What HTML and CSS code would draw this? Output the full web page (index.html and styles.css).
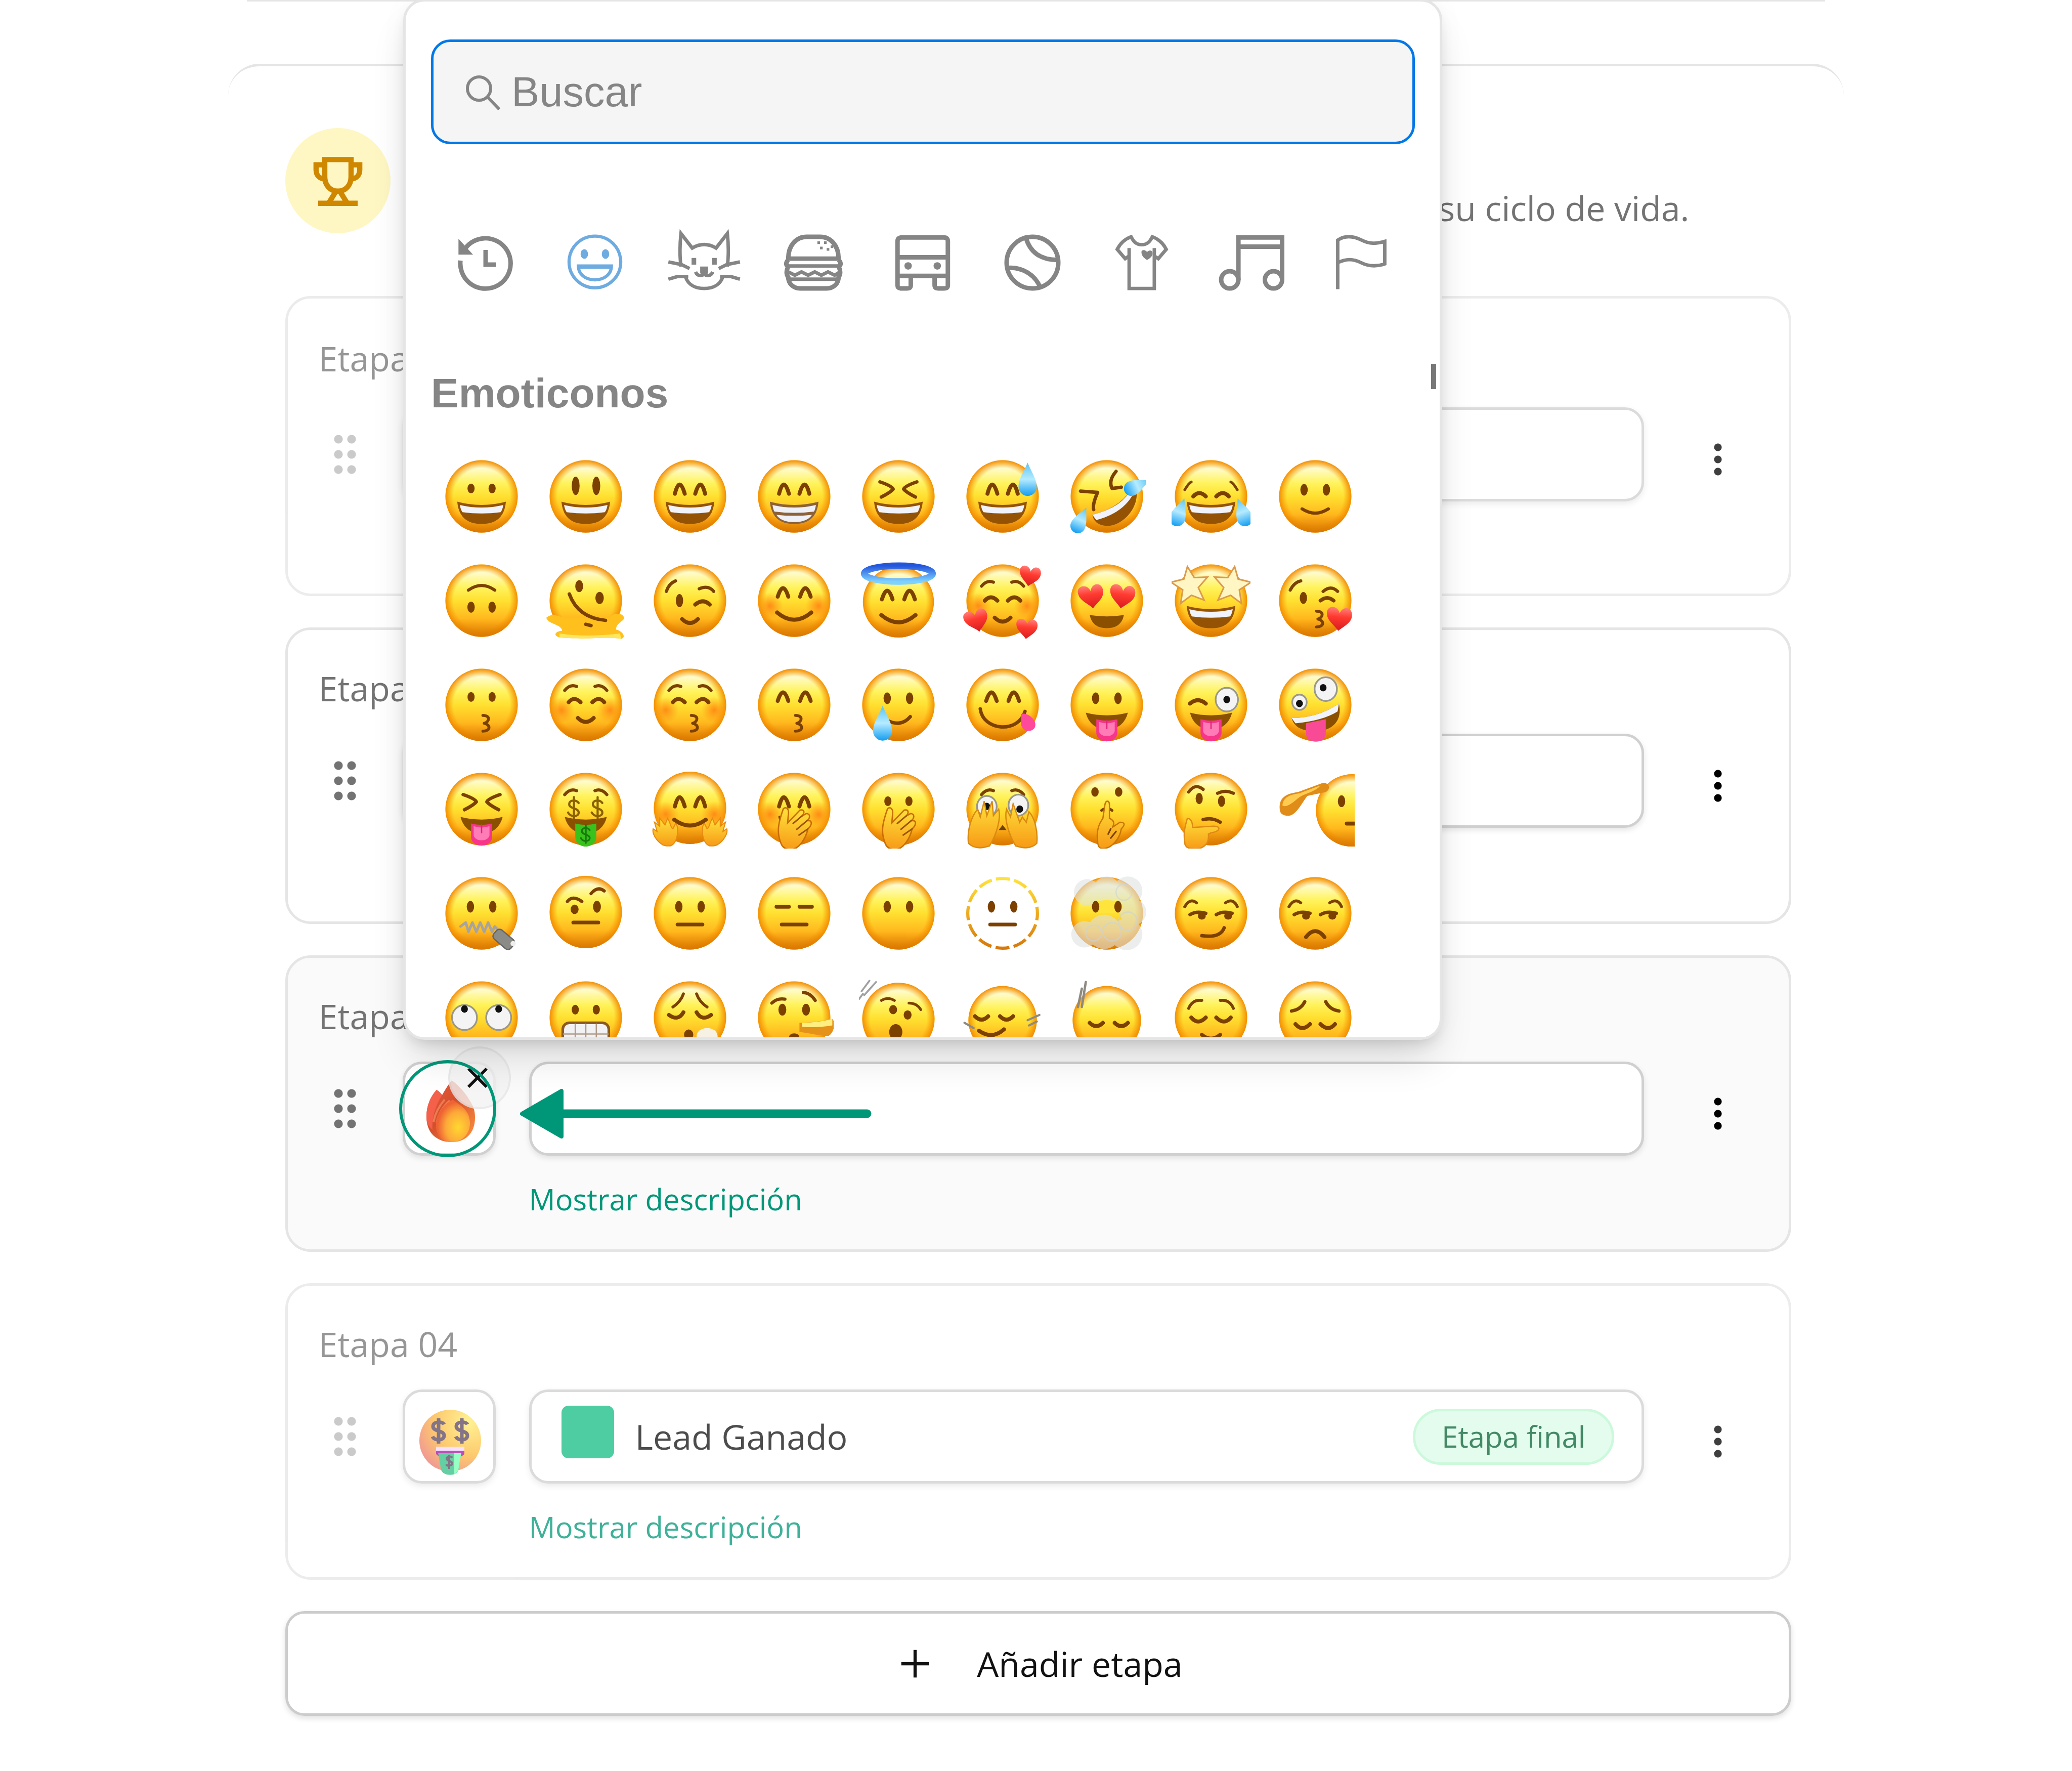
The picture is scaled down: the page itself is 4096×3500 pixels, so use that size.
FILE: index.html
```html
<!DOCTYPE html>
<html lang="es">

<head>
    <meta charset="utf-8">
    <meta name="viewport" content="width=device-width, initial-scale=1.0">
    <title>Etapas del ciclo de vida</title>
    <link rel="stylesheet" href="styles.css">
</head>

<body>
    <!-- gradients shared by the emoji drawings -->
    <svg class="defs" aria-hidden="true">
        <defs>
            <linearGradient id="skin" x1="0" y1="0" x2="0" y2="1">
                <stop offset="0" stop-color="#fff08a" />
                <stop offset=".1" stop-color="#fffcd2" />
                <stop offset=".32" stop-color="#fff35c" />
                <stop offset=".5" stop-color="#ffe030" />
                <stop offset=".8" stop-color="#ffb01a" />
                <stop offset="1" stop-color="#ee930c" />
            </linearGradient>
            <radialGradient id="rim" cx=".5" cy=".5" r=".5">
                <stop offset=".78" stop-color="#f59300" stop-opacity="0" />
                <stop offset="1" stop-color="#f28a00" stop-opacity=".95" />
            </radialGradient>
            <linearGradient id="shade" x1="0" y1="0" x2="0" y2="1">
                <stop offset=".75" stop-color="#d97800" stop-opacity="0" />
                <stop offset="1" stop-color="#d07000" stop-opacity=".7" />
            </linearGradient>
            <radialGradient id="blush">
                <stop offset="0" stop-color="#ff7a10" stop-opacity=".8" />
                <stop offset="1" stop-color="#ff8a10" stop-opacity="0" />
            </radialGradient>
            <linearGradient id="water" x1="0" y1="0" x2="0" y2="1">
                <stop offset="0" stop-color="#5cc4f0" />
                <stop offset=".5" stop-color="#b5ebff" />
                <stop offset="1" stop-color="#129df2" />
            </linearGradient>
            <linearGradient id="hand" x1="0" y1="0" x2="0" y2="1">
                <stop offset="0" stop-color="#ffe23c" />
                <stop offset="1" stop-color="#f79a16" />
            </linearGradient>
            <linearGradient id="halo" x1="0" y1="0" x2="0" y2="1">
                <stop offset="0" stop-color="#2456dc" />
                <stop offset="1" stop-color="#7ed2ff" />
            </linearGradient>
            <linearGradient id="dash" x1="0" y1="0" x2="0" y2="1">
                <stop offset="0" stop-color="#ffe23c" />
                <stop offset=".5" stop-color="#eeac20" />
                <stop offset="1" stop-color="#d6780c" />
            </linearGradient>
            <linearGradient id="heart" x1="0" y1="0" x2="0" y2="1">
                <stop offset="0" stop-color="#ff7f7b" />
                <stop offset=".4" stop-color="#ff3b30" />
                <stop offset="1" stop-color="#d81a20" />
            </linearGradient>
            <linearGradient id="flame" x1="0" y1="0" x2="1" y2="1">
                <stop offset="0" stop-color="#e85a44" />
                <stop offset=".45" stop-color="#d4502c" />
                <stop offset="1" stop-color="#ff9440" />
            </linearGradient>
            <radialGradient id="flame-in" cx=".65" cy=".65" r=".6">
                <stop offset="0" stop-color="#ffd830" />
                <stop offset=".6" stop-color="#fda93a" />
                <stop offset="1" stop-color="#ee6234" />
            </radialGradient>
            <radialGradient id="gold" cx=".8" cy=".2" r="1">
                <stop offset="0" stop-color="#ffef70" />
                <stop offset=".55" stop-color="#fdb83e" />
                <stop offset="1" stop-color="#e86a78" />
            </radialGradient>
        </defs>
    </svg>

    <div class="previous"></div>

    <main class="panel">
        <header class="panel-header">
            <span class="trophy">
                <svg viewBox="0 0 40 40" fill="none" stroke="#d08700" stroke-width="2">
                    <path d="M15 12h10v6.500c0 3.200-2 5.500-5 5.500s-5-2.300-5-5.500z" />
                    <path d="M15 14h-3.300v1.800c0 2.200 1.400 3.600 3.600 3.600M25 14h3.300v1.800c0 2.200-1.400 3.600-3.600 3.600" />
                    <path d="M19.300 24l-2.800 4.500M20.700 24l2.800 4.500M12.500 28.600h15" />
                </svg>
            </span>
            <div class="panel-text">
                <p>Define cada momento de su ciclo de vida.</p>
            </div>
        </header>

        <section class="stage stage-first muted">
            <h2>Etapa 01</h2>
            <div class="stage-row">
                <button class="drag" aria-label="Mover etapa 01"></button>
                <button class="icon-box" aria-label="Icono de la etapa 01"></button>
                <div class="field"><input type="text" aria-label="Nombre de la etapa 01"></div>
                <button class="more" aria-label="Opciones de la etapa 01"></button>
            </div>
            <a class="show" href="#">Mostrar descripción</a>
        </section>

        <section class="stage">
            <h2>Etapa 02</h2>
            <div class="stage-row">
                <button class="drag" aria-label="Mover etapa 02"></button>
                <button class="icon-box" aria-label="Icono de la etapa 02"></button>
                <div class="field"><input type="text" aria-label="Nombre de la etapa 02"></div>
                <button class="more" aria-label="Opciones de la etapa 02"></button>
            </div>
            <a class="show" href="#">Mostrar descripción</a>
        </section>

        <section class="stage active">
            <h2>Etapa 03</h2>
            <div class="stage-row">
                <button class="drag" aria-label="Mover etapa 03"></button>
                <button class="icon-box" aria-label="Icono de la etapa 03">
                    <svg class="fire" viewBox="0 0 96 122">
                        <path d="M50 0C64 10 78 26 87 42 93 52 96 60 96 74c0 30-18 48-46 48C20 122 0 104 0 72 0 50 8 32 20 19c4 2 8 6 11 10C35 22 42 10 50 0z" fill="url(#flame)" />
                        <path d="M20 19c4 2 8 6 11 10C20 46 10 72 12 98 4 90 0 84 0 72 0 50 8 32 20 19z" fill="#f4604a" />
                        <path d="M36 38C24 52 17 66 14 82M46 40C32 52 24 66 20 84" fill="none" stroke="#ec7c50" stroke-width="4" />
                        <path d="M52 38c14 12 32 18 34 44 1 20-12 40-36 40-20 0-32-14-31-36 1-22 15-38 33-48z" fill="url(#flame-in)" />
                    </svg>
                </button>
                <div class="field"><input type="text" aria-label="Nombre de la etapa 03"></div>
                <button class="more" aria-label="Opciones de la etapa 03"></button>

                <button class="clear" aria-label="Quitar icono">
                    <svg viewBox="0 0 42 42"><path d="M3 3l36 36M39 3L3 39" stroke="#111" stroke-width="6" /></svg>
                </button>
                <span class="ring"></span>
                <svg class="arrow" viewBox="0 0 696 98" fill="#009778" stroke="#009778" stroke-linejoin="round">
                    <path d="M4 49L82 4v90z" stroke-width="8" />
                    <path d="M80 49h606" stroke-width="17" stroke-linecap="round" />
                </svg>
            </div>
            <a class="show" href="#">Mostrar descripción</a>
        </section>

        <section class="stage muted">
            <h2>Etapa 04</h2>
            <div class="stage-row">
                <button class="drag" aria-label="Mover etapa 04"></button>
                <button class="icon-box" aria-label="Icono de la etapa 04">
                    <svg class="money" viewBox="0 0 124 130">
                        <circle cx="62" cy="62" r="61" fill="url(#gold)" />
                        <g fill="none" stroke="#5c4660" stroke-width="7">
                            <path d="M50 30c-3-6-22-7-22 4s22 7 22 18-19 11-23 2M39 18v50" />
                            <path d="M96 30c-3-6-22-7-22 4s22 7 22 18-19 11-23 2M85 18v50" />
                        </g>
                        <path d="M34 74h56v8H34z" fill="#f5d8ff" />
                        <path d="M34 82h56v6c-2 4-8 6-14 6H48c-6 0-12-2-14-6z" fill="#a90fa0" />
                        <path d="M38 86h46l-6 34c-2 13-30 13-34 0z" fill="#2fc084" />
                        <path d="M70 86h14l-6 34c-1 4-4 6-8 8z" fill="#74ffb0" />
                        <path d="M66 96c-2-4-11-3-11 2s11 4 11 9-10 6-12 2M60 91v27" fill="none" stroke="#5c4660" stroke-width="4" />
                    </svg>
                </button>
                <div class="field">
                    <span class="swatch"></span>
                    <input type="text" value="Lead Ganado" aria-label="Nombre de la etapa 04">
                    <span class="badge">Etapa final</span>
                </div>
                <button class="more" aria-label="Opciones de la etapa 04"></button>
            </div>
            <a class="show" href="#">Mostrar descripción</a>
        </section>

        <button class="add">
            <svg viewBox="0 0 16 16"><path d="M8 2.800v10.400M2.800 8h10.400" stroke="#111" stroke-width="1.200" /></svg>
            <span>Añadir etapa</span>
        </button>
    </main>

    <div class="picker">
        <div class="search">
            <svg viewBox="0 0 68 70" fill="none" stroke="#858585" stroke-width="6">
                <circle cx="26" cy="27" r="23" />
                <path d="M42 43l24 25" />
            </svg>
            <input type="search" placeholder="Buscar" aria-label="Buscar">
        </div>

        <nav class="categories">
            <button aria-label="Recientes">
                <svg viewBox="0 0 42 42"><path d="M4.500 12A19 19 0 1 1 2 19.500M21 11.500V22.500h8" /><path class="solid" d="M.5 3v12h11z" /></svg>
            </button>
            <button class="selected" aria-label="Emoticonos">
                <svg viewBox="0 0 42 42"><circle cx="21" cy="20.500" r="19.500" /><path d="M8.500 23.500h25c0 6-5 10.500-12.500 10.500S8.500 29.500 8.500 23.500z" /><path d="M9 24.500h24" /><ellipse class="solid" cx="13" cy="14.500" rx="2.800" ry="3.600" /><ellipse class="solid" cx="29" cy="14.500" rx="2.800" ry="3.600" /></svg>
            </button>
            <button aria-label="Animales">
                <svg viewBox="0 0 42 42"><path class="thin" d="M3.500 24C2.500 16 2.500 8 3.500-1L12 10c6-3.500 12-3.500 18 0L38.500-1C39.500 8 39.500 16 38.500 24M7 32c2 5.500 7 8.500 14 8.500S33 37.500 35 32" /><path class="thin" d="M-6 20.500l10 2 6 3M-6 33.500l7-2h8M48 20.500l-10 2-6 3M48 33.500l-7-2h-8M21 26v3c-1 2.500-5 2.500-6.500-1M21 29c1 2.500 5 2.500 6.500-1" /><path class="solid" d="M18 24h6v5l-3 2-3-2zM11.500 17.500h3.500v5h-3.500zM27 17.500h3.500v5H27z" /></svg>
            </button>
            <button aria-label="Comida">
                <svg viewBox="0 0 42 42"><path d="M2 18C2 8 8 1.500 16 1.500h10C34 1.500 40 8 40 18z" /><path class="thin" d="M1 23.500h40M2 28l5 2.500 5-2.500 5 2.500 5-2.500 5 2.500 5-2.500 5 2.500 4-2.500M3 33.500h36" /><path d="M2 19c-2 2-2 4 0 5-1.500 3-1.500 6 0 8 0 5 4 8.500 9 8.500h20c5 0 9-3.500 9-8.500 1.500-2 1.500-5 0-8 2-1 2-3 0-5" /><path class="solid" d="M24 5h2v2h-2zM29 5h2v2h-2zM26 9h2v2h-2zM31 10h2v2h-2zM34 8h2v2h-2z" /></svg>
            </button>
            <button aria-label="Viajes">
                <svg viewBox="0 0 42 42"><path d="M5 2h32c2 0 3 1 3 3v26H2V5c0-2 1-3 3-3zM2 17h38M2 31v7c0 2 1 2.500 3 2.500h4c2 0 3-.500 3-2.500v-7M30 31v7c0 2 1 2.500 3 2.500h4c2 0 3-.500 3-2.500v-7" /><circle class="solid" cx="10" cy="23.500" r="2.800" /><circle class="solid" cx="32" cy="23.500" r="2.800" /></svg>
            </button>
            <button aria-label="Actividades">
                <svg viewBox="0 0 42 42"><circle cx="21" cy="21" r="19.500" /><path d="M16 2c3 11 11 17 24 17M2 25c11-1 21 5 25 15" /></svg>
            </button>
            <button aria-label="Objetos">
                <svg viewBox="0 0 42 42"><path class="thin" d="M13 1.500C9 3 5 6 2.500 11l6 7 3-2v24.500h19V16l3 2 6-7C37 6 33 3 29 1.500c-2 4-4 6-8 6s-6-2-8-6zM11.500 10v6M30.500 10v6" /><path class="solid" d="M21 12c2-1 3 0 4 1 1-1 3-2 4 0 1 3-2 5-4 6-2-1-5-4-4-7z" /></svg>
            </button>
            <button aria-label="Símbolos">
                <svg viewBox="0 0 42 42"><path d="M11.500 34V2h33v32M11.500 9h33" /><circle cx="5" cy="34" r="6.500" /><circle cx="38" cy="34" r="6.500" /></svg>
            </button>
            <button aria-label="Banderas">
                <svg viewBox="0 0 42 42"><path class="thin" d="M4 41V4c6-4 12-3 18 0s11 3 17.500 1v17c-6 2-12 2-18-1s-11-3-17.500 0" /></svg>
            </button>
        </nav>

        <h2 class="picker-title">Emoticonos</h2>
        <div id="emojis" class="emojis"></div>
        <span class="thumb"></span>
    </div>

    <script src="emojis.js"></script>
</body>

</html>
```

FILE: styles.css
```css
* {
    box-sizing: border-box;
}

body {
    margin: 0;
    position: relative;
    background-color: white;
    font-family: "Open Sans", "Noto Sans", sans-serif;
    font-size: 68px;
    line-height: 100px;
    color: #111;
}

button,
input {
    font: inherit;
    color: inherit;
    margin: 0;
    padding: 0;
    border: none;
    background: none;
}

button {
    cursor: pointer;
}

svg {
    display: block;
}

.defs {
    position: absolute;
    width: 0;
    height: 0;
}

/* bottom edge of the section above */
.previous {
    height: 3px;
    margin: 0 488px;
    background-color: #e5e5e5;
}

.panel {
    margin: 123px 11% 0;
    padding: 122px 104px 110px 113px;
    border-top: 5px solid #e5e5e5;
    border-radius: 62px 62px 0 0;
}

.panel-header {
    display: flex;
    justify-content: space-between;
    align-items: flex-end;
    margin-bottom: 124px;
    padding-right: 202px;
    color: #737373;
}

.panel-header p {
    margin: 0;
    white-space: nowrap;
}

.trophy {
    width: 208px;
    height: 208px;
    border-radius: 50%;
    background-color: #fef7c3;
}

/* stages */
.stage {
    margin-bottom: 62px;
    padding: 65px 80px 59px 61px;
    border: 5px solid #e5e5e5;
    border-radius: 50px;
}

.stage-first {
    padding-top: 68px;
    padding-bottom: 56px;
}

.muted {
    opacity: .75;
}

.active {
    background-color: #fafafa;
}

.stage h2 {
    margin: 0 0 40px;
    font-size: 68px;
    font-weight: normal;
    color: #737373;
}

.stage-first h2 {
    margin-bottom: 47px;
}

.stage-row {
    position: relative;
    display: flex;
    align-items: center;
    margin-bottom: 46px;
}

.drag {
    flex: none;
    width: 104px;
    margin-right: 62px;
    color: #737373;
}

/* grip of two by three dots */
.drag::before {
    content: "";
    display: block;
    width: 52px;
    height: 90px;
    margin: 0 auto;
    background-image: radial-gradient(circle, currentColor 8px, transparent 9px);
    background-size: 26px 30px;
}

.muted .drag {
    color: #b9b9b9;
}

.more {
    flex: none;
    width: 120px;
    height: 72px;
    margin: 20px 0 0 86px;
    background-image: radial-gradient(circle, #000 7px, transparent 8px);
    background-size: 120px 24px;
}

.icon-box,
.field {
    height: 186px;
    border: 5px solid #d0d0d0;
    border-radius: 38px;
    background-color: white;
    box-shadow: 0 5px 12px rgba(0, 0, 0, .1);
}

.icon-box {
    flex: none;
    width: 184px;
    margin-right: 66px;
}

.field {
    flex: 1;
    display: flex;
    align-items: center;
    padding: 0 54px 0 59px;
}

.field input {
    flex: 1;
    min-width: 0;
    outline: none;
}

.fire {
    width: 96px;
    height: 122px;
    margin: 10px 0 0 42px;
}

.money {
    width: 124px;
    height: 130px;
    margin: 22px 0 0 27px;
}

.swatch {
    width: 104px;
    height: 104px;
    margin: 0 42px 18px 0;
    border-radius: 14px;
    background-color: #13bc83;
}

.badge {
    padding: 10px 52px 11px;
    border: 5px solid #bbf7d0;
    border-radius: 56px;
    background-color: #dcfce7;
    font-size: 58px;
    line-height: 80px;
    color: #056233;
}

.show {
    display: block;
    width: max-content;
    margin-left: 416px;
    font-size: 58px;
    line-height: 80px;
    color: #009778;
    text-decoration: none;
}

/* mark around the stage icon */
.clear {
    position: absolute;
    left: 256px;
    top: -30px;
    width: 124px;
    height: 124px;
    border: 4px solid rgba(0, 0, 0, .04);
    border-radius: 50%;
    background-color: rgba(243, 243, 243, .8);
}

.clear svg {
    width: 42px;
    height: 42px;
    margin-left: 33px;
}

.ring {
    position: absolute;
    left: 159px;
    top: -3px;
    width: 192px;
    height: 192px;
    border: 6px solid #009778;
    border-radius: 50%;
}

.arrow {
    position: absolute;
    left: 398px;
    top: 54px;
    width: 696px;
    height: 98px;
}

.add {
    display: flex;
    align-items: center;
    justify-content: center;
    gap: 80px;
    width: 100%;
    height: 207px;
    border: 5px solid #ccc;
    border-radius: 38px;
    background-color: white;
    box-shadow: 0 5px 12px rgba(0, 0, 0, .12);
}

.add svg {
    width: 84px;
    height: 84px;
}

/* emoji picker */
.picker {
    position: absolute;
    top: -2px;
    left: 797px;
    display: flex;
    flex-direction: column;
    width: 2054px;
    height: 2057px;
    padding: 75px 49px 0 50px;
    overflow: hidden;
    border: 5px solid #e5e5e5;
    border-radius: 42px;
    background-color: white;
    box-shadow: 0 48px 80px -16px rgba(0, 0, 0, .14), 0 14px 30px -12px rgba(0, 0, 0, .16), 0 0 60px rgba(0, 0, 0, .03);
    font-family: "Liberation Sans", Arial, sans-serif;
    font-size: 83px;
    line-height: 96px;
    color: #858585;
}

.search {
    position: relative;
    flex: none;
    margin-bottom: 179px;
}

.search svg {
    position: absolute;
    left: 69px;
    top: 70px;
    width: 68px;
    height: 70px;
}

.search input {
    display: block;
    width: 100%;
    height: 207px;
    padding: 0 40px 0 154px;
    border: 5px solid #0078e8;
    border-radius: 38px;
    background-color: #f5f5f5;
    outline: none;
}

.search input::placeholder {
    color: #858585;
    opacity: 1;
}

.categories {
    flex: none;
    display: flex;
    margin-bottom: 155px;
}

.categories button {
    flex: 1;
}

.categories svg {
    width: 110px;
    height: 110px;
    margin: 0 auto;
    overflow: visible;
    fill: none;
    stroke: #858585;
    stroke-width: 3.4;
}

.categories .thin {
    stroke-width: 2.6;
}

.categories .solid {
    fill: #858585;
    stroke: none;
}

.categories .selected svg {
    stroke: #6eabe0;
    stroke-width: 2.4;
}

.categories .selected .solid {
    fill: #6eabe0;
}

.picker-title {
    flex: none;
    margin: 0 0 53px;
    font-size: 82px;
}

.emojis {
    display: grid;
    grid-template-columns: repeat(9, 206px);
    grid-auto-rows: 206px;
    margin-left: -3px;
}

.emojis button {
    padding: 25px;
}

.emojis svg {
    width: 156px;
    height: 156px;
    overflow: hidden;
}

.thumb {
    position: absolute;
    top: 716px;
    right: 7px;
    width: 10px;
    height: 50px;
    background-color: #777;
}
```

FILE: emojis.js
```js
const brown = "#7c4100";
const dest = document.querySelector("#emojis");

// small drawing helpers, all in a 60 x 60 box
const line = (d, w = 2.6, color = brown) => `<path d="${d}" fill="none" stroke="${color}" stroke-width="${w}" stroke-linecap="round" stroke-linejoin="round"/>`;
const fill = (d, color) => `<path d="${d}" fill="${color}"/>`;
const oval = (x, y, rx, ry, color = brown) => `<ellipse cx="${x}" cy="${y}" rx="${rx}" ry="${ry}" fill="${color}"/>`;
const move = (x, y, inner, rest = "") => `<g transform="translate(${x} ${y}) ${rest}">${inner}</g>`;
const ball = (x = 30, y = 30, r = 27.5) => ["skin", "rim", "shade"].map(g => `<circle cx="${x}" cy="${y}" r="${r}" fill="url(#${g})"/>`).join("");
const heart = (x, y, s, turn = 0) => move(x, y, fill("M0 5C-2-2-12-1-10 7-9 12-3 15 0 19 4 15 10 12 10 6 10-1 2-2 0 5z", "url(#heart)"), `rotate(${turn}) scale(${s})`);
const drop = (x, y, s, turn = 0) => move(x, y, fill("M0-11C3-4 6 0 6 5a6 6 0 0 1-12 0C-6 0-3-4 0-11z", "url(#water)"), `rotate(${turn}) scale(${s})`);
const star = (x, y, turn) => move(x, y, `<path d="M0-14L4-5 14-4 6 3 9 13 0 8-9 13-6 3-14-4-4-5z" fill="#fff6c4" stroke="#dc9a4c" stroke-width="1.2"/>`, `rotate(${turn})`);
const dollar = (x, y, s, color) => move(x, y, line("M4-4C2-7-4-7-4-3S4 0 4 4-3 8-5 4M0-9V9", 1.8, color), `scale(${s})`);

// eyes
const dots = oval(22, 24, 2.7, 3.7) + oval(38, 24, 2.7, 3.7);
const dotsBig = oval(21.5, 25, 2.8, 4.4) + oval(38.5, 25, 2.8, 4.4);
const tall = oval(22.3, 22, 3, 7) + oval(38, 22, 3, 7);
const happy = line("M18.500 28Q22 14 26 28M34 28Q38 14 41.500 28", 3);
const happyHigh = line("M17.500 27Q21.500 14 25.500 27M34.500 27Q38.500 14 42.500 27", 3);
const squeeze = line("M16 19Q25 22 26 24.500 24 27 17 30.500M44 19Q35 22 34 24.500 36 27 43 30.500");
const soft = line("M16.500 30Q21 25 26 30M34 30Q39 25 43.500 30", 3);
const closed = line("M15 30Q20 36 26 30M34 30Q40 36 45 30", 3);
const brows = line("M14 19Q18 14 23 16M37 16Q42 14 46 19", 2.4);
const side = line("M14 31Q19 28 26 30M34 31Q39 28 46 30", 2.6) + oval(23, 32, 3, 2.8) + oval(43, 32, 3, 2.8);
const eyeball = (x, y, rx, ry, px, py) => `<ellipse cx="${x}" cy="${y}" rx="${rx}" ry="${ry}" fill="#f4f4f4" stroke="#9a978c" stroke-width="1.3"/>` + oval(px, py, 2.6, 2.8, "#111");
const cheeks = `<circle cx="11.500" cy="34" r="10" fill="url(#blush)"/><circle cx="48.500" cy="34" r="10" fill="url(#blush)"/>`;

// mouths
const laugh = fill("M11.500 34Q30 39 48.500 34 47 51 30 51 13 51 11.500 34z", "#945304") + fill("M13.500 36.500Q30 40.500 46.500 36.500 46 40 44.500 42 30 44 15.500 42 14 40 13.500 36.500z", "#f1f3fa");
const grin = fill("M11.500 34Q30 39 48.500 34 47 51 30 51 13 51 11.500 34z", "#8d6238") + fill("M13.500 36.500Q30 40.500 46.500 36.500 46 40 45 41.500 30 43.500 15 41.500 14 40 13.500 36.500zM16.500 44Q30 45.500 43.500 44 40 49.500 30 49.500 20 49.500 16.500 44z", "#eef1f7");
const smile = line("M20 39.500Q30 46 40 39.500", 2.4);
const wide = line("M17 39Q30 50 43 39", 3);
const tiny = line("M24 43Q30 49 36 43", 3);
const flat = line("M20.500 38.500H39.500", 2.8);
const kiss = line("M31 38C37 38 36 43 32 44 37 45 37 50 31 50", 2.2);
const open = fill("M14 36Q30 40 46 36 43 48 30 49 17 48 14 36z", "#8a5000");
const tongue = open + fill("M22 41Q30 43 38 41V51C38 60 22 60 22 51z", "#f7358a") + fill("M24 43Q30 45 36 43V50C35 55 25 55 24 50z", "#ff7cb6") + line("M30 42V48", 1, "#e0277a");

// hands
const palm = (x, y, s, turn = 0) => move(x, y, `<path d="M-8 12C-12 4-10-4-8-12-6-14-4-12-4-9L-4-2 4-12C7-13 8-11 6-8L9-10C12-10 12-7 10-5L12-5C14-4 13-1 11 1 10 8 6 17-1 17-5 17-7 15-8 12z" fill="url(#hand)" stroke="#c96d05" stroke-width="1"/>` + line("M0-2L6-8M3 2L10-5M5 6L11 1", 1.1, "#9a5204"), `rotate(${turn}) scale(${s})`);
const hug = (x, flip) => move(x, 46, `<path d="M-5 11C-10 8-13 2-12-1L-9 1-11-6-7-3-7-9-3-4-1-9C2-4 1-2 3-1L5-5C8-3 7 10 1 12-2 12-3 12-5 11z" fill="url(#hand)" stroke="#e88a10" stroke-width=".8"/>`, `scale(${flip} 1)`);

const emojis = [
    ["sonrisa", ball() + dots + laugh],
    ["ojos grandes", ball() + tall + laugh],
    ["ojos sonrientes", ball() + happy + laugh],
    ["radiante", ball() + happy + grin],
    ["risa", ball() + squeeze + laugh],
    ["sudor frío", ball() + happy + laugh + drop(49, 17, 1.15)],
    ["a carcajadas", ball() + line("M37 11Q31 18 34 24L41 23M10 26L23 27Q19 36 20 40") + fill("M19 44Q43 38 51 20C59 38 38 58 24 51Q20 49 19 44z", "#945304") + fill("M19 44Q43 38 49 23L49 30Q41 43 22 48z", "#f1f3fa") + drop(10, 48, .95, 25) + drop(53, 22, .95, 65)],
    ["llorando de risa", ball() + line("M10 25Q13 20 15 19M50 25Q47 20 45 19", 2) + soft + laugh + drop(6, 42, 1, 20) + drop(54, 42, 1, -20)],
    ["sonrisa leve", ball() + dotsBig + smile],

    ["al revés", ball() + line("M20 22Q30 15 40 22", 2.4) + oval(22, 35, 2.8, 4.2) + oval(38, 35, 2.8, 4.2)],
    ["derretida", ball() + fill("M0 43C6 38 10 44 18 43L48 43C52 38 60 40 59 44 56 47 53 48 53 52 58 53 61 58 57 59 44 57 34 60 10 58 4 56 8 53 12 53 12 48 1 48 0 43z", "#ffc01e") + fill("M10 55Q30 58 56 55L57 59C44 57 34 60 10 58z", "#ffe65a") + oval(25, 19, 3, 4.600) + oval(40.500, 28, 3.200, 4.600) + line("M17.500 25Q24 43 45 45M30 48L34 49")],
    ["guiño", ball() + line("M12 23Q14 17 19 15M37 21Q44 18 48 23", 2.400) + oval(22, 30, 2.800, 5) + line("M34 33Q40 28 45 33", 3) + line("M24 44Q30 50 36 44", 3)],
    ["sonrojada", ball() + cheeks + happyHigh + wide],
    ["ángel", ball(30, 31, 27) + `<ellipse cx="30" cy="9.500" rx="26" ry="6" fill="none" stroke="url(#halo)" stroke-width="5"/>` + move(0, 2, happyHigh + wide)],
    ["con corazones", ball() + cheeks + brows + soft + tiny + heart(52, 4, .8, 10) + heart(8, 37, .9, -15) + heart(49, 44, .8, 5)],
    ["enamorada", ball() + heart(17, 18, .95, -8) + heart(43, 18, .95, 8) + fill("M17 41Q30 43 43 41 41 51 30 51 19 51 17 41z", "#8a5000")],
    ["estrellas", ball() + laugh + star(14, 18, -8) + star(46, 18, 8)],
    ["beso", ball() + line("M11 22Q14 16 19 15M36 23Q42 18 47 23", 2.400) + oval(21, 28, 2.800, 4.500) + line("M34 30Q39 26 44 30", 2.800) + kiss + heart(49, 35, .95, 5)],

    ["besando", ball() + dots + kiss],
    ["feliz", ball() + cheeks + brows + line("M17 28Q21 23 26 28M35 28Q40 23 44 28", 3) + line("M24 40Q30 46 36 40", 3)],
    ["beso tímido", ball() + cheeks + brows + line("M17 28Q21 23 26 28M35 28Q40 23 44 28", 3) + kiss],
    ["beso sonriente", ball() + happyHigh + kiss],
    ["lágrima", ball() + dotsBig + line("M22 42Q32 47 39 39") + drop(18, 44, 1.200)],
    ["delicioso", ball() + happyHigh + line("M13 33C15 50 42 52 47 35") + fill("M44 37C48 35 58 42 54 48 50 52 44 49 44 44z", "#ff4a9c")],
    ["lengua", ball() + dotsBig + tongue],
    ["guiño y lengua", ball() + line("M14 29Q20 24 26 29", 3) + eyeball(42, 26, 8.500, 9, 42, 26) + tongue],
    ["alocada", ball() + eyeball(18, 28, 5.500, 5.800, 18, 29) + eyeball(38, 18, 8.500, 9, 36, 17) + fill("M12 40Q32 40 48 29C51 42 43 50 30 50 20 50 14 47 12 40z", "#8a5000") + fill("M12 40Q32 40 48 29L47 35Q36 42 15 44z", "#f1f3fa") + fill("M23 44L38 41V52C38 60 23 60 23 52z", "#f94a96")],

    ["lengua y ojos cerrados", ball() + squeeze + tongue],
    ["dinero", ball() + brows + dollar(21, 29, .9, "#8a6000") + dollar(39, 29, .9, "#8a6000") + open + fill("M22 41Q30 43 38 41V51C38 61 22 61 22 51z", "#3ac21c") + dollar(30, 49, .75, "#187a0c")],
    ["abrazo", ball(30, 29) + cheeks + happy + line("M18 38Q30 47 42 38", 3) + hug(14, 1) + hug(46, -1)],
    ["mano en la boca", ball() + cheeks + happy + line("M19 36L20 40", 2) + palm(29, 43, 1.050, 5)],
    ["sorpresa", ball() + dots + palm(29, 43, 1.050, 5)],
    ["espiando", ball() + brows + eyeball(18, 28, 7.500, 8, 18, 28) + eyeball(42, 27, 7.500, 8, 43, 30) + `<path d="M4 56C3 46 6 36 11 30L13 36 16 24 18 35 22 24 23 35 27 30C29 38 25 50 20 58 14 60 8 60 4 56zM56 56C57 46 54 36 50 32L48 40 45 36 43 40 38 26 36 36 33 30C31 38 35 50 40 58 46 60 52 60 56 56z" fill="url(#hand)" stroke="#d98a10" stroke-width="1"/>` + fill("M30 42L33 46H27z", "#6e4200")],
    ["silencio", ball() + oval(21, 17, 2.800, 3.600) + oval(39, 17, 2.800, 3.600) + line("M26 31Q30 28 34 31", 2) + `<path d="M23 54C22 47 24 41 27 37L28.500 27C29 23 32 23 32 27L32 37C37 39 35 43 34 44L40 40C44 40 44 42 41 45 40 52 34 60 27 60 24 60 23 58 23 54z" fill="url(#hand)" stroke="#c87505" stroke-width="1"/>` + line("M33 45L31 49M37 47L33 52", 1.200)],
    ["pensando", ball() + line("M13 17Q18 10 24 15M35 18Q41 15 47 18", 2.400) + oval(21, 22, 2.700, 4.300) + oval(38, 24, 2.700, 4.300) + line("M24 38Q31 36 37 40") + `<path d="M10 55C9 48 10 44 12 37 14 37 16 39 16 44L32 43C38 43 37 47 30 48L28 49C29 58 22 61 16 60 13 60 10 59 10 55z" fill="url(#hand)" stroke="#df8a15" stroke-width="1"/>`],
    ["saludo", ball(58, 31) + oval(50, 24, 2.800, 4.500) + line("M54 41H60", 3) + fill("M3 30C2 20 10 18 17 17L36 10C41 10 42 15 38 17L24 20C20 25 15 36 9 35 5 35 3 33 3 30z", "#e08c18") + fill("M5 27C6 20 12 19 18 18L34 12C30 17 22 18 18 21 14 24 8 30 5 27z", "#ffcb50")],

    ["cremallera", ball() + dotsBig + line("M14 40L18 37 20 44 23 37 26 44 29 37 32 44 35 37 38 44 40 40 46 46", 2, "#a9a49b") + `<rect x="41" y="43" width="17" height="9" rx="3" transform="rotate(40 45 45)" fill="#8b8b88" stroke="#666" stroke-width="1"/><circle cx="54" cy="53" r="2" fill="#eee"/>`],
    ["ceja levantada", ball(30, 29) + line("M16 21Q20 16 27 21M34 15Q39 9 44 13", 2.400) + oval(21.500, 27, 3, 3.600) + oval(38.500, 25, 3, 4.500) + line("M20.500 37H39.500", 2.800)],
    ["neutral", ball() + dotsBig + flat],
    ["sin expresión", ball() + line("M16.500 25H26M34 25H43.500", 2.800) + flat],
    ["sin boca", ball() + dotsBig],
    ["punteada", `<circle cx="30" cy="30" r="26.500" fill="none" stroke="url(#dash)" stroke-width="2.400" stroke-dasharray="10.600 3.280" stroke-dashoffset="5.300"/>` + dotsBig + flat],
    ["entre nubes", ball() + `<g fill="#dfe3e0" opacity=".6"><circle cx="15" cy="14" r="10"/><circle cx="30" cy="12" r="10"/><circle cx="46" cy="13" r="11"/><circle cx="50" cy="29" r="10"/><circle cx="45" cy="46" r="12"/><circle cx="28" cy="44" r="13"/><circle cx="13" cy="46" r="10"/></g>` + `<g fill="none" stroke="#cdd3d8" opacity=".6"><circle cx="20" cy="45" r="6"/><circle cx="34" cy="44" r="7"/><circle cx="46" cy="36" r="7"/><circle cx="43" cy="14" r="6"/></g>` + oval(30, 25, 12, 5, "#ffe53b") + dotsBig],
    ["pícara", ball() + line("M10 25Q14 18 19 22M41 22Q47 18 50 25", 2.200) + side + line("M23 47Q37 49 40 41")],
    ["molesta", ball() + line("M10 25Q14 18 19 22M41 22Q47 18 50 25", 2.200) + side + line("M23 48Q30 39 37 48", 3)],

    ["ojos en blanco", ball() + eyeball(17, 30, 9.500, 9.500, 17, 23.500) + eyeball(43, 30, 9.500, 9.500, 43, 23.500)],
    ["mueca", ball() + dots + `<rect x="12.500" y="34" width="35" height="17" rx="5" fill="#f2f2f5" stroke="#8b5a20" stroke-width="2"/>` + line("M13 42.500H47M22 35V50M30 35V50M38 35V50", 1, "#b09a88")],
    ["exhalando", ball() + line("M17 22Q23 18 25 12M43 22Q37 18 35 12", 2.200) + line("M14 28Q21 33 25 26M46 28Q39 33 35 26", 3) + oval(29, 43, 3.500, 4) + oval(43, 44, 8, 6, "#f7f1e4")],
    ["mentirosa", ball() + line("M13 19Q17 15 23 16M37 11Q42 11 46 17", 2.400) + oval(21, 24, 3, 4.500) + oval(39, 24, 3, 4.500) + fill("M34 34Q46 34 59 31C62 34 60 42 56 44 50 44 42 42 34 41z", "#e4921a") + fill("M36 34Q48 34 59 31L59 36Q48 38 36 37z", "#ffee80") + oval(30, 45, 4, 3)],
    ["temblando", ball(30, 31) + line("M17 17Q22 14 27 17M38 19Q44 19 47 24", 2) + oval(26, 24, 3, 3.500) + oval(37, 28, 3, 3.500) + oval(28, 41, 5, 6) + line("M2 10L8 2M4 13L13 3M0 16L3 12", 1.400, "#a0a0a0")],
    ["negando", ball(30, 32, 26) + line("M9 29Q14 34 19 29M28 29Q33 34 38 29", 3) + line("M12 40Q22 47 31 39", 3) + line("M1 34L8 38M50 36L56 33M49 32L58 28", 1.600, "#8f8a80")],
    ["asintiendo", ball(30, 32, 26) + line("M17 34Q22 39 27 34M36 34Q41 39 46 34", 3) + oval(22, 47, 2, 1.500) + oval(40, 47, 2, 1.500) + line("M8 22L11 8M11 22L14 3", 1.800, "#8f8a80")],
    ["aliviada", ball() + line("M13 23Q16 16 23 17M37 17Q44 16 47 23", 2.200) + closed + line("M23 43Q30 49 37 43", 2.800)],
    ["pensativa", ball() + line("M12 25Q19 24 22 18M48 25Q41 24 38 18", 2.600) + move(0, 5, closed) + line("M24 49Q30 45 36 49")]
];

emojis.forEach(([name, art]) => {
    const button = document.createElement("button");
    button.setAttribute("aria-label", name);
    button.innerHTML = `<svg viewBox="0 0 60 60">${art}</svg>`;
    dest.appendChild(button);
});
```
